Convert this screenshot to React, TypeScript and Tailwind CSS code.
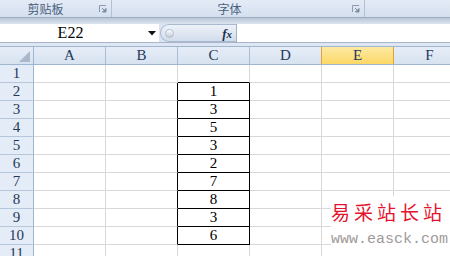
import React from "react";

const COLS = ["A", "B", "C", "D", "E", "F"];
const VALUES: Record<number, string> = { 2: "1", 3: "3", 4: "5", 5: "3", 6: "2", 7: "7", 8: "8", 9: "3", 10: "6" };
const ROWS = [1, 2, 3, 4, 5, 6, 7, 8, 9, 10, 11];

function Launcher() {
  return (
    <svg width="8" height="8" viewBox="0 0 8 8" className="shrink-0">
      <path d="M0.5 7V0.5H7" fill="none" stroke="#8d9bb0" strokeWidth="1" />
      <path d="M3 3L6.5 6.5M7 3.5V7H3.5Z" fill="#7f8ca0" stroke="#7f8ca0" strokeWidth="1" />
    </svg>
  );
}

function Cell({ row, col }: { row: number; col: number }) {
  const boxed = row >= 2 && row <= 10;
  // B and C get black right edges where the numbers are boxed
  let right = "border-r-[#d8d8d8]";
  if ((col === 1 || col === 2) && boxed) right = "border-r-black";
  let bottom = "border-b-[#d8d8d8]";
  if (col === 2 && row >= 1 && row <= 10) bottom = "border-b-black";
  return (
    <div className={`w-[72px] h-full shrink-0 border-r border-b ${right} ${bottom} flex items-center justify-center text-[15px] text-black`}>
      {col === 2 ? VALUES[row] ?? "" : ""}
    </div>
  );
}

export default function App() {
  return (
    <div className="w-[450px] h-[256px] overflow-hidden relative bg-white font-[family-name:Liberation_Serif,serif]">
      {/* ribbon group labels */}
      <div className="h-[18px] flex border-b border-[#9aabc2] bg-gradient-to-b from-[#e3ebf6] to-[#d5e0ee] font-[family-name:Noto_Sans_CJK_SC,sans-serif] text-[12px] text-[#4a5f7d]">
        <div className="w-[112px] flex items-center border-r border-[#b3c1d3]">
          <span className="w-[91px] text-center leading-none">剪贴板</span>
          <span className="ml-[8px]"><Launcher /></span>
        </div>
        <div className="w-[253px] flex items-center border-r border-[#b3c1d3]">
          <span className="w-[235px] text-center leading-none">字体</span>
          <span className="ml-[5px]"><Launcher /></span>
        </div>
        <div className="flex-1" />
      </div>
      <div className="h-[6px] bg-gradient-to-b from-[#b9c6d8] to-[#dbe4f0]" />

      {/* formula bar */}
      <div className="h-[19px] flex border-b border-[#a7b6ca] bg-[#dbe4f0]">
        <div className="w-[159px] h-full bg-white flex items-center relative">
          <span className="absolute left-0 w-[141px] text-center text-[16px] text-black leading-none">E22</span>
          <svg width="8" height="5" viewBox="0 0 8 5" className="absolute left-[148px] top-[7px]">
            <path d="M0 0H8L4 4.5Z" fill="#111" />
          </svg>
        </div>
        <div className="ml-[1px] w-[76px] h-full rounded-l-full border border-r-0 border-[#a9b9cf] bg-gradient-to-b from-[#edf2f9] to-[#d2ddeb] flex items-center">
          <span className="ml-[4px] w-[9px] h-[9px] rounded-full bg-gradient-to-b from-[#ffffff] to-[#c3cbd6] border border-[#b4bfcd]" />
          <span className="ml-auto mr-[4px] italic font-bold text-[13px] text-[#1c304d] leading-none">f<span className="text-[11px]">x</span></span>
        </div>
        <div className="flex-1 h-full bg-white border-l border-[#a0b0c6]" />
      </div>
      <div className="h-[3px] bg-[#dde6f2]" />

      {/* column headers */}
      <div className="h-[19px] flex border-y border-[#9eb6ce] text-[15px] text-[#1e395b]">
        <div className="w-[34px] h-full shrink-0 border-r border-[#9eb6ce] bg-gradient-to-b from-[#e6edf7] to-[#d7e2f0] relative">
          <svg width="11" height="11" viewBox="0 0 11 11" className="absolute right-[3px] bottom-[2px]">
            <path d="M11 0V11H0Z" fill="#a9b8cb" />
          </svg>
        </div>
        {COLS.map((c) => (
          <div
            key={c}
            className={`h-full shrink-0 flex items-center justify-center border-r ${
              c === "E"
                ? "w-[73px] -ml-[1px] border-l bg-gradient-to-b from-[#fde9a2] to-[#fcd865] border-[#e2a33c]"
                : "w-[72px] bg-gradient-to-b from-[#e6edf7] to-[#d7e2f0] border-[#aabdd4]"
            }`}
          >
            {c}
          </div>
        ))}
      </div>

      {/* rows */}
      {ROWS.map((r) => (
        <div key={r} className="h-[18px] flex">
          <div className="w-[34px] h-full shrink-0 border-r border-b border-r-[#9eb6ce] border-b-[#b6c7dc] bg-[#e4ecf7] flex items-center justify-center text-[15px] text-[#1e395b]">
            {r}
          </div>
          {COLS.map((c, i) => (
            <Cell key={c} row={r} col={i} />
          ))}
        </div>
      ))}

      {/* watermark */}
      <div className="absolute left-[331px] top-[196px] w-[119px] h-[60px] bg-white flex flex-col whitespace-nowrap">
        <span className="mt-[5px] font-[family-name:Noto_Sans_CJK_SC,sans-serif] text-[19px] leading-[22px] tracking-[4px] text-[#e4132d]">易采站长站</span>
        <span className="mt-[10px] font-[family-name:Liberation_Mono,monospace] text-[15px] leading-[14px] text-[#a09a9a]">www.easck.com</span>
      </div>
    </div>
  );
}
